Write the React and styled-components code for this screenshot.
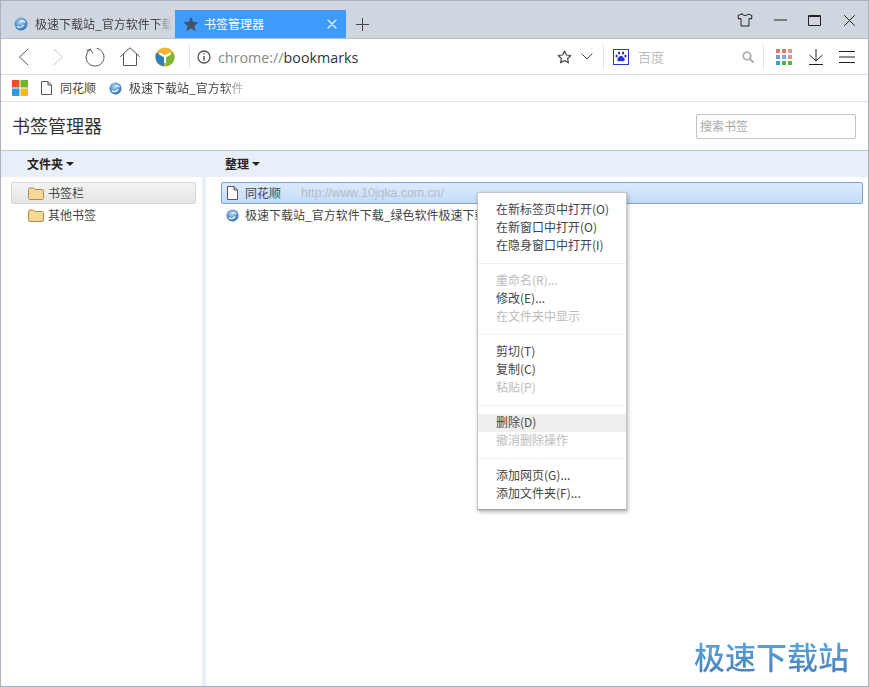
import styled, { createGlobalStyle } from "styled-components";

const CJK = `"Noto Sans CJK SC", "Noto Sans", sans-serif`;

const GlobalStyle = createGlobalStyle`
  html, body {
    margin: 0;
    padding: 0;
    height: 100%;
    overflow: hidden;
    background: #fff;
  }
  body {
    font-family: ${CJK};
    font-size: 12px;
    color: #333;
  }
`;

const Window = styled.div`
  position: relative;
  box-sizing: border-box;
  width: 869px;
  height: 687px;
  border: 1px solid #a9b1bd;
  display: flex;
  flex-direction: column;
  overflow: hidden;
`;

const TabBar = styled.div`
  height: 37px;
  flex: none;
  display: flex;
  align-items: flex-end;
  background: #d0d6e0;
  border-bottom: 1px solid #b9bfc9;
`;

const Tab = styled.div`
  height: 28px;
  box-sizing: border-box;
  display: flex;
  align-items: center;
  flex: none;
  width: ${(p) => p.$width}px;
  background: ${(p) => (p.$active ? "#3f9bfb" : "transparent")};
  color: ${(p) => (p.$active ? "#fff" : "#444")};
  padding-left: ${(p) => (p.$active ? 8 : 13)}px;
`;

const TabTitle = styled.span`
  flex: 1;
  margin-left: ${(p) => p.$gap}px;
  margin-bottom: 2px;
  white-space: nowrap;
  overflow: hidden;
  ${(p) =>
    p.$fade &&
    `-webkit-mask-image: linear-gradient(to right, #000 88%, transparent 100%);
     mask-image: linear-gradient(to right, #000 88%, transparent 100%);`}
`;

const TabClose = styled.span`
  display: flex;
  width: 10px;
  margin-right: 9px;
`;

const NewTab = styled.div`
  width: 32px;
  height: 28px;
  display: flex;
  align-items: center;
  justify-content: center;
`;

const WindowControls = styled.div`
  margin-left: auto;
  height: 36px;
  display: flex;
  align-items: center;
  margin-right: 1px;
`;

const Slot = styled.div`
  flex: none;
  width: ${(p) => p.$w}px;
  margin-right: ${(p) => p.$mr || 0}px;
  display: flex;
  align-items: center;
  justify-content: center;
`;

const Toolbar = styled.div`
  height: 35px;
  flex: none;
  display: flex;
  align-items: center;
  padding-right: 2px;
  border-bottom: 1px solid #dcdcdc;
  background: #fff;
`;

const VDivider = styled.div`
  width: 1px;
  height: 24px;
  flex: none;
  background: #e2e2e2;
`;

const Address = styled.div`
  flex: 1;
  margin-top: 1px;
  font-family: "Open Sans", "Noto Sans", sans-serif;
  font-size: 14.3px;
  color: #333;
  white-space: nowrap;
`;

const Scheme = styled.span`
  color: #8a8a8a;
`;

const SearchHint = styled.div`
  width: 98px;
  font-size: 13px;
  color: #bdbdbd;
`;

const BookmarksBar = styled.div`
  height: 26px;
  flex: none;
  display: flex;
  align-items: center;
  padding-left: 11px;
  border-bottom: 1px solid #e0e0e0;
  background: #fff;
  color: #444;
`;

const BookmarkItem = styled.div`
  display: flex;
  align-items: center;
  gap: ${(p) => p.$gap}px;
  margin-left: ${(p) => p.$ml}px;
  white-space: nowrap;
`;

const Label = styled.span`
  margin-bottom: 2px;
`;

const FadeLabel = styled(Label)`
  -webkit-mask-image: linear-gradient(to right, #000 80%, rgba(0, 0, 0, 0.25) 100%);
  mask-image: linear-gradient(to right, #000 80%, rgba(0, 0, 0, 0.25) 100%);
`;

const Header = styled.div`
  height: 48px;
  flex: none;
  display: flex;
  align-items: center;
  justify-content: space-between;
  padding: 0 12px;
  background: #fff;
`;

const Title = styled.h1`
  margin: 0 0 2px -1px;
  font-size: 18px;
  font-weight: 400;
  color: #333;
`;

const SearchBox = styled.input`
  box-sizing: border-box;
  width: 160px;
  height: 25px;
  padding: 0 3px 2px;
  border: 1px solid #c4c4c4;
  border-radius: 2px;
  font-family: ${CJK};
  font-size: 12px;
  outline: none;
  &::placeholder {
    color: #a8a8a8;
  }
`;

const ActionBar = styled.div`
  height: 26px;
  flex: none;
  display: flex;
  align-items: center;
  background: #e9eff9;
  border-top: 1px solid #b3c6de;
  font-weight: 700;
  color: #222;
`;

const ActionCell = styled.div`
  display: flex;
  align-items: center;
  gap: 3px;
  width: ${(p) => p.$w}px;
  padding-left: ${(p) => p.$pl}px;
  box-sizing: border-box;
`;

const Caret = styled.span`
  width: 0;
  height: 0;
  border-left: 4px solid transparent;
  border-right: 4px solid transparent;
  border-top: 4px solid #222;
`;

const Panes = styled.div`
  flex: 1;
  display: flex;
  min-height: 0;
`;

const FolderPane = styled.div`
  width: 205px;
  flex: none;
  box-sizing: border-box;
  padding: 5px 6px 0 10px;
  border-right: 4px solid #e9eff9;
`;

const FolderRow = styled.div`
  height: 22px;
  box-sizing: border-box;
  display: flex;
  align-items: center;
  gap: 4px;
  padding-left: 16px;
  border-radius: 2px;
  color: #444;
  border: 1px solid ${(p) => (p.$selected ? "#d6d6d6" : "transparent")};
  background: ${(p) =>
    p.$selected ? "linear-gradient(#f4f4f4, #e4e4e4)" : "transparent"};
`;

const ListPane = styled.div`
  flex: 1;
  padding: 5px 5px 0 15px;
`;

const ListRow = styled.div`
  height: 22px;
  box-sizing: border-box;
  display: flex;
  align-items: center;
  padding-left: 4px;
  border-radius: 2px;
  white-space: nowrap;
  color: #444;
  border: 1px solid ${(p) => (p.$selected ? "#7da2ce" : "transparent")};
  background: ${(p) =>
    p.$selected ? "linear-gradient(#dcebfc, #c3dcfb)" : "transparent"};
`;

const RowIcon = styled.span`
  display: flex;
  width: 13px;
  margin-right: 6px;
  justify-content: center;
`;

const RowUrl = styled.span`
  margin-left: 20px;
  font-family: "Liberation Sans", sans-serif;
  font-size: 12.3px;
  color: #b4bcc6;
`;

const Menu = styled.div`
  position: absolute;
  left: 476px;
  top: 191px;
  width: 150px;
  box-sizing: border-box;
  padding: 8px 0 6px;
  background: #fff;
  border: 1px solid #c6c6c6;
  border-bottom-color: #a0a0a0;
  box-shadow: 1px 2px 4px rgba(0, 0, 0, 0.3);
`;

const MenuItem = styled.div`
  height: 18px;
  line-height: 16px;
  padding-left: 18px;
  color: ${(p) => (p.$disabled ? "#bcbcbc" : "#444")};
  background: ${(p) => (p.$hover ? "#efefef" : "transparent")};
  white-space: nowrap;
`;

const MenuSep = styled.div`
  height: 1px;
  margin: 8px 0;
  background: #efefef;
`;

const Watermark = styled.div`
  position: absolute;
  right: 19px;
  bottom: 9px;
  font-size: 31px;
  line-height: 42px;
  font-weight: 500;
  color: transparent;
  background: linear-gradient(#58aee0, #4a7cb8);
  -webkit-background-clip: text;
  background-clip: text;
`;

const line = { fill: "none", stroke: "currentColor", strokeLinecap: "round", strokeLinejoin: "round" };

function Globe({ size = 14 }) {
  return (
    <svg width={size} height={size} viewBox="0 0 14 14">
      <defs>
        <radialGradient id="globeFill" cx="0.45" cy="0.35" r="0.75">
          <stop offset="0" stopColor="#bcd8f0" />
          <stop offset="0.5" stopColor="#5b98d0" />
          <stop offset="1" stopColor="#1f5fa8" />
        </radialGradient>
      </defs>
      <circle cx="7" cy="7" r="6.5" fill="url(#globeFill)" />
      <path d="M3 9.5c2 1.4 5 1 7-1.5M6.5 4.5c2-1 4-.4 4.5 1" fill="none" stroke="#fff" strokeWidth="1.2" />
    </svg>
  );
}

function DocIcon() {
  return (
    <svg width="11" height="14" viewBox="0 0 11 14">
      <path d="M.5.5h6.5l3.5 3.5v9.5H.5zM7 .5V4h3.5" fill="#fff" stroke="#555" />
    </svg>
  );
}

function FolderIcon() {
  return (
    <svg width="16" height="13" viewBox="0 0 16 13">
      <path d="M.5 2.5c0-1 .5-1.500 1.500-1.500h3.500l1.500 1.500h7c1 0 1.500.5 1.500 1.500v7c0 1-.5 1.500-1.500 1.500H2c-1 0-1.500-.5-1.500-1.500z" fill="#f7d993" stroke="#a98b52" />
    </svg>
  );
}

function BrowserLogo() {
  return (
    <svg width="20" height="20" viewBox="0 0 20 20">
      <circle cx="10" cy="10" r="9.500" fill="#f3b52c" />
      <path d="M10 10 1.500 5.500A9.500 9.500 0 0 0 9 19.400z" fill="#2f7fb8" />
      <path d="M10 10l8.500-4.500A9.500 9.500 0 0 1 11 19.400z" fill="#7cb93a" />
      <path d="M4.500 6.500 10 9.500l5.500-3M10 9.500V16" fill="none" stroke="#fff" strokeWidth="2" />
    </svg>
  );
}

function PawIcon() {
  return (
    <svg width="16" height="16" viewBox="0 0 16 16">
      <rect x=".5" y=".5" width="15" height="15" fill="#fff" stroke="#2b35c4" />
      <g fill="#2b35c4">
        <ellipse cx="6" cy="4" rx="1.200" ry="1.600" />
        <ellipse cx="10" cy="4" rx="1.200" ry="1.600" />
        <ellipse cx="3.600" cy="7" rx="1.100" ry="1.500" />
        <ellipse cx="12.400" cy="7" rx="1.100" ry="1.500" />
        <path d="M8 6.800c1.500 0 2 1.200 3 2.200s1 3.300-1 3.300c-.8 0-1.300-.3-2-.3s-1.200.3-2 .3c-2 0-2-2.300-1-3.300s1.500-2.200 3-2.200z" />
      </g>
    </svg>
  );
}

function AppsIcon() {
  const colors = ["#dd7a66", "#dd7a66", "#e29a8c", "#5fa4d6", "#6cb7e0", "#e58f8f", "#3f9bd0", "#55b04a", "#55b04a"];
  return (
    <svg width="16" height="16" viewBox="0 0 16 16">
      {colors.map((c, i) => (
        <rect key={i} x={(i % 3) * 6} y={Math.floor(i / 3) * 6} width="4" height="4" fill={c} />
      ))}
    </svg>
  );
}

function WindowsLogo() {
  return (
    <svg width="16" height="16" viewBox="0 0 16 16">
      <rect width="7.500" height="7.500" fill="#e8512a" />
      <rect x="8.500" width="7.500" height="7.500" fill="#6fb52c" />
      <rect y="8.500" width="7.500" height="7.500" fill="#2f9be0" />
      <rect x="8.500" y="8.500" width="7.500" height="7.500" fill="#f6b91a" />
    </svg>
  );
}

const topMenu = [
  [{ t: "在新标签页中打开(O)" }, { t: "在新窗口中打开(O)" }, { t: "在隐身窗口中打开(I)" }],
  [{ t: "重命名(R)...", off: true }, { t: "修改(E)..." }, { t: "在文件夹中显示", off: true }],
  [{ t: "剪切(T)" }, { t: "复制(C)" }, { t: "粘贴(P)", off: true }],
  [{ t: "删除(D)", hover: true }, { t: "撤消删除操作", off: true }],
  [{ t: "添加网页(G)..." }, { t: "添加文件夹(F)..." }],
];

export default function App() {
  return (
    <Window>
      <GlobalStyle />
      <TabBar>
        <Tab $width={174}>
          <Globe />
          <TabTitle $gap={7} $fade>极速下载站_官方软件下载</TabTitle>
          <Slot $w={3} />
        </Tab>
        <Tab $width={171} $active>
          <svg width="16" height="16" viewBox="0 0 16 16">
            <path d="M8 .8l2.200 4.900 5.300.6-4 3.600 1.100 5.300L8 12.500l-4.600 2.700 1.100-5.300-4-3.600 5.300-.6z" fill="#44536a" />
          </svg>
          <TabTitle $gap={5}>书签管理器</TabTitle>
          <TabClose>
            <svg width="10" height="10" viewBox="0 0 10 10" color="#d5e8fd">
              <path d="M1 1l8 8M9 1l-8 8" {...line} strokeWidth="1.600" />
            </svg>
          </TabClose>
        </Tab>
        <NewTab>
          <svg width="13" height="13" viewBox="0 0 13 13" color="#444">
            <path d="M6.500 0v13M0 6.500h13" {...line} strokeLinecap="butt" />
          </svg>
        </NewTab>
        <WindowControls>
          <Slot $w={36}>
            <svg width="16" height="14" viewBox="0 0 16 14" color="#222">
              <path d="M5 1 1 2.500l.5 3.500L4 5.500V13h8V5.500l2.500.5.500-3.500L11 1c-.5 2-5.500 2-6 0z" {...line} />
            </svg>
          </Slot>
          <Slot $w={34}>
            <svg width="13" height="2" viewBox="0 0 13 2" color="#222">
              <path d="M0 1h13" {...line} />
            </svg>
          </Slot>
          <Slot $w={34}>
            <svg width="13" height="11" viewBox="0 0 13 11" color="#222">
              <path d="M.5.500h12v10H.5zM.5 1.500h12" {...line} strokeLinecap="butt" />
            </svg>
          </Slot>
          <Slot $w={36}>
            <svg width="11" height="11" viewBox="0 0 11 11" color="#222">
              <path d="M.5.500l10 10M10.500.500l-10 10" {...line} />
            </svg>
          </Slot>
        </WindowControls>
      </TabBar>

      <Toolbar>
        <Slot $w={44}>
          <svg width="11" height="18" viewBox="0 0 11 18" color="#555">
            <path d="M10 1 1.500 9l8.500 8" {...line} />
          </svg>
        </Slot>
        <Slot $w={26}>
          <svg width="11" height="18" viewBox="0 0 11 18" color="#c8c8c8">
            <path d="M1 1l8.500 8L1 17" {...line} />
          </svg>
        </Slot>
        <Slot $w={48}>
          <svg width="20" height="20" viewBox="0 0 20 20" color="#555">
            <path d="M5.500 2.300A9 9 0 1 0 12 1.300M5.500 2.300 7.500 6M5.500 2.300 1.800 3.500" {...line} />
          </svg>
        </Slot>
        <Slot $w={22}>
          <svg width="20" height="19" viewBox="0 0 20 19" color="#555">
            <path d="M.5 9.500 10 .8l9.500 8.700M3.500 7.500v11h13v-11" {...line} />
          </svg>
        </Slot>
        <Slot $w={48}>
          <BrowserLogo />
        </Slot>
        <VDivider />
        <Slot $w={28}>
          <svg width="14" height="14" viewBox="0 0 14 14" color="#555">
            <circle cx="7" cy="7" r="6" {...line} strokeWidth="1.300" />
            <path d="M7 6v4.500M7 3.200v1.300" {...line} strokeWidth="1.500" strokeLinecap="butt" />
          </svg>
        </Slot>
        <Address>
          <Scheme>chrome://</Scheme>bookmarks
        </Address>
        <Slot $w={24}>
          <svg width="15" height="14" viewBox="0 0 15 14" color="#444">
            <path d="M7.500 1l1.900 4 4.400.5-3.200 3 .8 4.300-3.900-2.200-3.900 2.200.8-4.300-3.200-3 4.400-.5z" {...line} strokeWidth="1.200" />
          </svg>
        </Slot>
        <Slot $w={22} $mr={5}>
          <svg width="12" height="7" viewBox="0 0 12 7" color="#444">
            <path d="M1 1l5 5 5-5" {...line} />
          </svg>
        </Slot>
        <VDivider />
        <Slot $w={34}>
          <PawIcon />
        </Slot>
        <SearchHint>百度</SearchHint>
        <Slot $w={24} $mr={3}>
          <svg width="12" height="12" viewBox="0 0 12 12" color="#b0b0b0">
            <circle cx="5" cy="5" r="3.800" {...line} strokeWidth="1.800" />
            <path d="M8 8l3 3" {...line} strokeWidth="2.200" />
          </svg>
        </Slot>
        <VDivider />
        <Slot $w={40}>
          <AppsIcon />
        </Slot>
        <Slot $w={24}>
          <svg width="16" height="18" viewBox="0 0 16 18" color="#222">
            <path d="M8 1v12M1.500 7 8 13l6.500-6M1 16.500h14" {...line} strokeLinecap="butt" />
          </svg>
        </Slot>
        <Slot $w={38}>
          <svg width="16" height="14" viewBox="0 0 16 14" color="#222">
            <path d="M0 1.500h16M0 7h16M0 12.500h16" {...line} strokeLinecap="butt" />
          </svg>
        </Slot>
      </Toolbar>

      <BookmarksBar>
        <WindowsLogo />
        <BookmarkItem $ml={13} $gap={8}>
          <DocIcon />
          <Label>同花顺</Label>
        </BookmarkItem>
        <BookmarkItem $ml={13} $gap={7}>
          <Globe size={13} />
          <FadeLabel>极速下载站_官方软件</FadeLabel>
        </BookmarkItem>
      </BookmarksBar>

      <Header>
        <Title>书签管理器</Title>
        <SearchBox placeholder="搜索书签" readOnly />
      </Header>

      <ActionBar>
        <ActionCell $w={205} $pl={26}>
          <Label>文件夹</Label>
          <Caret />
        </ActionCell>
        <ActionCell $pl={19}>
          <Label>整理</Label>
          <Caret />
        </ActionCell>
      </ActionBar>

      <Panes>
        <FolderPane>
          <FolderRow $selected>
            <FolderIcon />
            <Label>书签栏</Label>
          </FolderRow>
          <FolderRow>
            <FolderIcon />
            <Label>其他书签</Label>
          </FolderRow>
        </FolderPane>
        <ListPane>
          <ListRow $selected>
            <RowIcon>
              <DocIcon />
            </RowIcon>
            <Label>同花顺</Label>
            <RowUrl>http://www.10jqka.com.cn/</RowUrl>
          </ListRow>
          <ListRow>
            <RowIcon>
              <Globe size={13} />
            </RowIcon>
            <Label>极速下载站_官方软件下载_绿色软件极速下载站</Label>
          </ListRow>
        </ListPane>
      </Panes>

      <Menu>
        {topMenu.map((group, i) => (
          <div key={i}>
            {i > 0 && <MenuSep />}
            {group.map((item) => (
              <MenuItem key={item.t} $disabled={item.off} $hover={item.hover}>
                {item.t}
              </MenuItem>
            ))}
          </div>
        ))}
      </Menu>

      <Watermark>极速下载站</Watermark>
    </Window>
  );
}
